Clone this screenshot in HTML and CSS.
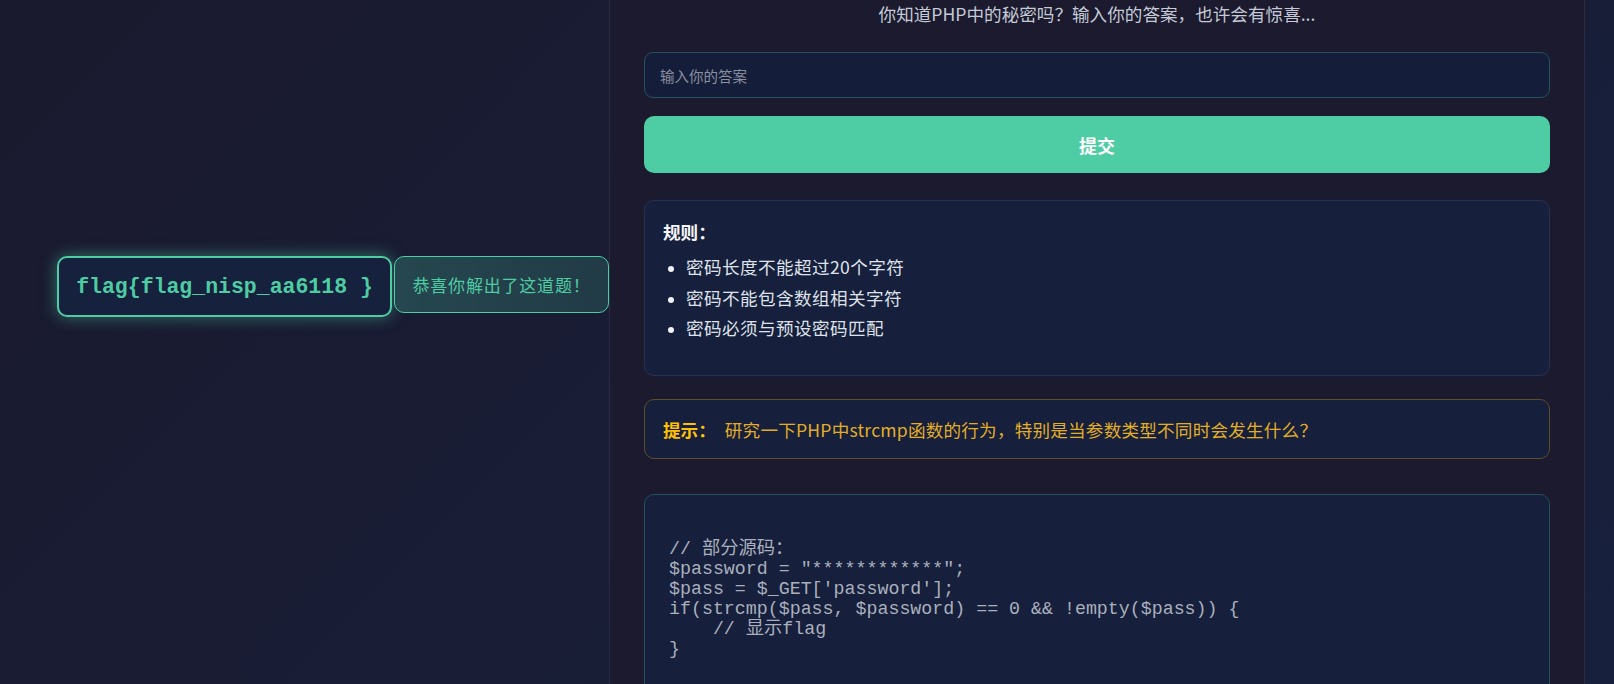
FILE: index.html
```html
<!DOCTYPE html>
<html lang="zh-CN">
<head>
<meta charset="utf-8">
<title>PHP 秘密</title>
<link rel="stylesheet" href="styles.css">
</head>
<body>
<div class="page">
  <aside class="side">
    <div class="flag-row">
      <div class="flag">flag{flag_nisp_aa6118 }</div>
      <div class="success">恭喜你解出了这道题！</div>
    </div>
  </aside>
  <main class="panel">
    <p class="subtitle">你知道PHP中的秘密吗？输入你的答案，也许会有惊喜...</p>
    <form class="answer-form">
      <input class="answer-input" type="text" placeholder="输入你的答案">
      <button class="submit-btn" type="button">提交</button>
    </form>
    <section class="rules">
      <h3 class="rules-title">规则：</h3>
      <ul class="rules-list">
        <li>密码长度不能超过20个字符</li>
        <li>密码不能包含数组相关字符</li>
        <li>密码必须与预设密码匹配</li>
      </ul>
    </section>
    <section class="hint">
      <strong class="hint-label">提示：</strong>
      <span class="hint-text">研究一下PHP中strcmp函数的行为，特别是当参数类型不同时会发生什么？</span>
    </section>
    <pre class="code">

// 部分源码：
$password = "************";
$pass = $_GET['password'];
if(strcmp($pass, $password) == 0 &amp;&amp; !empty($pass)) {
    // 显示flag
}
</pre>
  </main>
</div>
</body>
</html>
```
FILE: styles.css
```css
* {
  box-sizing: border-box;
}

html, body {
  margin: 0;
  padding: 0;
}

body {
  width: 1614px;
  height: 684px;
  overflow: hidden;
  background: linear-gradient(135deg, #1a1a2e 0%, #17203d 100%);
  font-family: "Noto Sans CJK SC", "Noto Sans", sans-serif;
  color: #d6dae4;
}

.page {
  display: flex;
  height: 684px;
  overflow: hidden;
}

.side {
  width: 609px;
  flex: none;
}

.flag-row {
  display: flex;
  align-items: flex-start;
  gap: 2px;
  margin-top: 256px;
  padding-left: 57px;
}

.flag {
  height: 61px;
  width: 335px;
  display: flex;
  align-items: center;
  justify-content: center;
  border: 2px solid #4ecca3;
  border-radius: 10px;
  background: #16213e;
  box-shadow: 0 0 16px rgba(78, 204, 163, 0.5);
  color: #4ecca3;
  font-family: "Liberation Mono", "Courier New", monospace;
  font-weight: bold;
  font-size: 21.5px;
  white-space: pre;
}

.success {
  height: 57px;
  width: 215px;
  display: flex;
  align-items: center;
  justify-content: center;
  border: 1px solid #4ecca3;
  border-radius: 10px;
  background: linear-gradient(90deg, #26474f 0%, #213b47 100%);
  color: #4ecca3;
  font-size: 17px;
  letter-spacing: 0.8px;
}

.panel {
  width: 976px;
  flex: none;
  height: 684px;
  overflow: hidden;
  background: #1b1a2e;
  border-left: 1px solid #2c2c42;
  border-right: 1px solid #2c2c42;
  padding: 3px 34px 0;
}

.subtitle {
  margin: 0;
  text-align: center;
  font-size: 17.6px;
  line-height: 21px;
  color: #c5cad6;
}

.answer-form {
  display: flex;
  flex-direction: column;
  gap: 18px;
  margin-top: 28px;
}

.answer-input {
  height: 46px;
  width: 100%;
  border: 1px solid #26515a;
  border-radius: 9px;
  background: #141e3a;
  padding: 0 15px;
  font-family: "Noto Sans CJK SC", "Noto Sans", sans-serif;
  font-size: 14.5px;
  color: #d6dae4;
  outline: none;
}

.answer-input::placeholder {
  color: #8a909f;
}

.submit-btn {
  height: 57px;
  width: 100%;
  border: none;
  border-radius: 10px;
  background: #4ecca3;
  color: #ffffff;
  font-family: "Noto Sans CJK SC", "Noto Sans", sans-serif;
  font-weight: bold;
  font-size: 18px;
  cursor: pointer;
}

.rules {
  margin-top: 27px;
  height: 176px;
  border: 1px solid #2a3250;
  border-radius: 10px;
  background: #161f3b;
  padding: 20px 18px;
}

.rules-title {
  margin: 0;
  font-size: 17.6px;
  line-height: 21px;
  font-weight: bold;
  color: #f4f5f8;
}

.rules-list {
  margin: 10px 0 0;
  padding-left: 23px;
  list-style: disc;
  color: #dfe2ea;
}

.rules-list li {
  font-size: 17.6px;
  letter-spacing: 0.4px;
  line-height: 30.5px;
}

.rules-list li::marker {
  color: #f0f2f6;
  font-size: 15px;
}

.hint {
  margin-top: 23px;
  height: 60px;
  display: flex;
  align-items: center;
  gap: 9px;
  border: 1px solid #5c4e26;
  border-radius: 10px;
  background: #161f3b;
  padding: 0 18px;
  font-size: 17.6px;
}

.hint-label {
  color: #ffc107;
  font-weight: bold;
}

.hint-text {
  color: #e2ae28;
  letter-spacing: 0.2px;
}

.code {
  margin: 35px 0 0;
  height: 240px;
  border: 1px solid #24515a;
  border-radius: 10px;
  background: #161f3b;
  padding: 25px 24px 0;
  font-family: "Liberation Mono", "Courier New", "Noto Sans CJK SC", monospace;
  font-size: 18.3px;
  line-height: 19.97px;
  color: #aab0bd;
}
```
